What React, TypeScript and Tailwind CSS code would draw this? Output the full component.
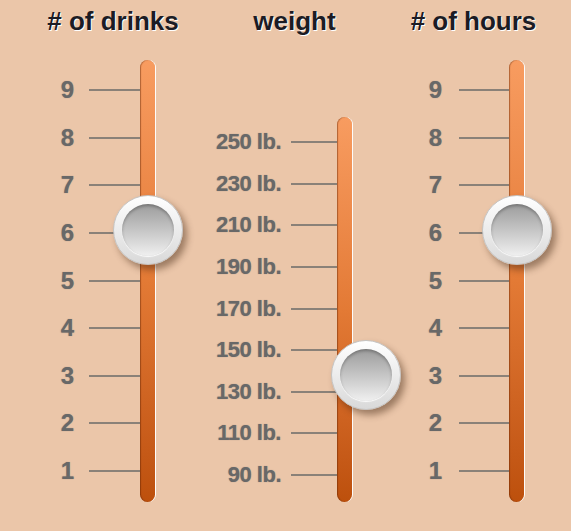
import React from "react";

type SliderProps = {
  labels: string[];
  labelW: number;
  gap: number;
  tickW: number;
  rowsPt: number;
  rowsPb: number;
  trackMt: number;
  knobTop: number;
  knobDx: number;
  labelClass: string;
};

function Knob({ top, dx }: { top: number; dx: number }) {
  return (
    <div
      className="absolute w-[70px] h-[70px] rounded-full flex items-center justify-center bg-linear-to-b from-[#ffffff] to-[#d9d9d9] border border-[#c4c4c4] shadow-[4px_5px_7px_rgba(60,30,10,0.45)]"
      style={{ top: top - 35, left: `calc(50% - 35px + ${dx}px)` }}
    >
      <div className="w-[52px] h-[52px] rounded-full bg-linear-to-b from-[#9c9c9c] to-[#f0f0f0] shadow-[inset_0_2px_3px_rgba(0,0,0,0.25),0_1px_1px_rgba(255,255,255,0.9)]" />
    </div>
  );
}

function Slider(p: SliderProps) {
  return (
    <div className="flex h-[442px]">
      <div
        className="flex flex-col justify-between"
        style={{ paddingTop: p.rowsPt, paddingBottom: p.rowsPb }}
      >
        {p.labels.map((l) => (
          <div key={l} className="flex items-center h-[20px]">
            <div
              className={`text-right font-bold text-[#686868] whitespace-nowrap [text-shadow:0_0_1px_rgba(90,90,90,0.6)] ${p.labelClass}`}
              style={{ width: p.labelW, marginRight: p.gap }}
            >
              {l}
            </div>
            <div className="h-[2px] bg-[#8a8178]" style={{ width: p.tickW }} />
          </div>
        ))}
      </div>
      <div className="relative flex" style={{ paddingTop: p.trackMt }}>
        <div className="w-[15px] h-full rounded-full bg-linear-to-b from-[#f89c60] via-[#e37a35] to-[#bd500c] shadow-[inset_1px_0_1px_rgba(90,30,0,0.45),1px_0_0_rgba(255,255,255,0.95)]" />
        <Knob top={p.knobTop} dx={p.knobDx} />
      </div>
    </div>
  );
}

export default function App() {
  const nums = ["9", "8", "7", "6", "5", "4", "3", "2", "1"];
  const weights = [
    "250 lb.",
    "230 lb.",
    "210 lb.",
    "190 lb.",
    "170 lb.",
    "150 lb.",
    "130 lb.",
    "110 lb.",
    "90 lb.",
  ];
  return (
    <div
      className="w-[571px] h-[531px] bg-[#ebc6a9] overflow-hidden"
      style={{ fontFamily: '"Liberation Sans", Arial, sans-serif' }}
    >
      <div className="flex pt-[8px] h-[60px] text-[26px] leading-[26px] font-bold text-[#1c1c24] [text-shadow:1px_1px_0_#ffffff]">
        <div className="w-[226px] text-center">{"# of drinks"}</div>
        <div className="w-[137px] text-center">weight</div>
        <div className="w-[13px]" />
        <div className="w-[195px] text-center">{"# of hours"}</div>
      </div>
      <div className="flex pl-[40px]">
        <Slider
          labels={nums}
          labelW={34}
          gap={15}
          tickW={51}
          rowsPt={20}
          rowsPb={21}
          trackMt={0}
          knobTop={170}
          knobDx={0}
          labelClass="text-[24px] leading-[20px]"
        />
        <div className="w-[44px]" />
        <Slider
          labels={weights}
          labelW={82}
          gap={10}
          tickW={46}
          rowsPt={72}
          rowsPb={17}
          trackMt={57}
          knobTop={315}
          knobDx={21}
          labelClass="text-[22px] leading-[20px] tracking-[-0.5px]"
        />
        <div className="w-[57px]" />
        <Slider
          labels={nums}
          labelW={33}
          gap={17}
          tickW={50}
          rowsPt={20}
          rowsPb={21}
          trackMt={0}
          knobTop={170}
          knobDx={0}
          labelClass="text-[24px] leading-[20px]"
        />
      </div>
    </div>
  );
}
